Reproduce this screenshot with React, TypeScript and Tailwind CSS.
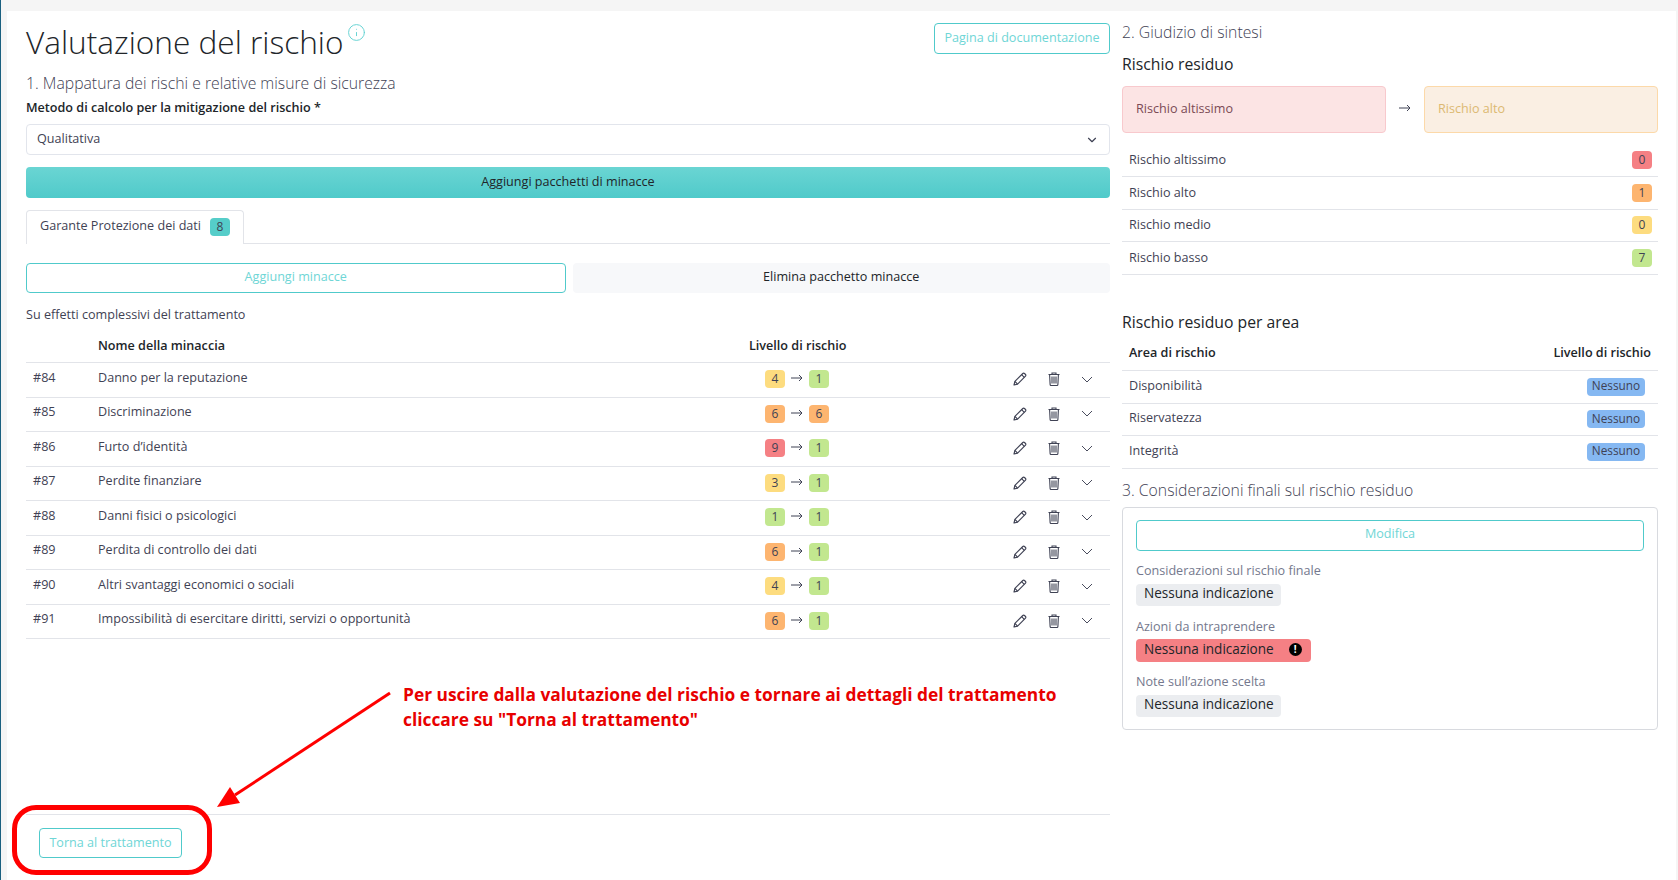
import { ChevronDown, Info } from "lucide-react";

const threats = [
  { id: "#84", name: "Danno per la reputazione", from: 4, to: 1 },
  { id: "#85", name: "Discriminazione", from: 6, to: 6 },
  { id: "#86", name: "Furto d’identità", from: 9, to: 1 },
  { id: "#87", name: "Perdite finanziare", from: 3, to: 1 },
  { id: "#88", name: "Danni fisici o psicologici", from: 1, to: 1 },
  { id: "#89", name: "Perdita di controllo dei dati", from: 6, to: 1 },
  { id: "#90", name: "Altri svantaggi economici o sociali", from: 4, to: 1 },
  { id: "#91", name: "Impossibilità di esercitare diritti, servizi o opportunità", from: 6, to: 1 },
];

const levelColors: Record<number, string> = {
  1: "bg-[#c2e78f]",
  3: "bg-[#fddc7f]",
  4: "bg-[#fddc7f]",
  6: "bg-[#fdb570]",
  9: "bg-[#f58084]",
};

const residual = [
  { label: "Rischio altissimo", value: 0, color: "bg-[#f58084]" },
  { label: "Rischio alto", value: 1, color: "bg-[#fdb570]" },
  { label: "Rischio medio", value: 0, color: "bg-[#fddc7f]" },
  { label: "Rischio basso", value: 7, color: "bg-[#c2e78f]" },
];

function PencilIcon() {
  return (
    <svg width="14" height="14" viewBox="0 0 14 14" fill="none" stroke="#3f4254" strokeWidth="1.15" strokeLinejoin="round">
      <path d="M1 13l.9-3.6L9.8 1.5a1.2 1.2 0 0 1 1.7 0l1 1a1.2 1.2 0 0 1 0 1.7L4.6 12.1Z" />
      <path d="M8.6 2.7l2.7 2.7M1.9 9.4l2.7 2.7" />
    </svg>
  );
}

function TrashIcon() {
  return (
    <svg width="12" height="14" viewBox="0 0 12 14" fill="none" stroke="#3f4254" strokeWidth="1.1">
      <path d="M.5 2.5h11M4 2.5V1h4v1.5M1.6 2.5l.5 10a1 1 0 0 0 1 1h5.8a1 1 0 0 0 1-1l.5-10" />
      <path d="M4 4.5v7M6 4.5v7M8 4.5v7" />
    </svg>
  );
}

function ChevronIcon() {
  return (
    <svg width="12" height="7" viewBox="0 0 12 7" fill="none" stroke="#3f4254" strokeWidth="0.95">
      <path d="M1 1l5 5 5-5" />
    </svg>
  );
}

function ArrowIcon({ className }: { className: string }) {
  return (
    <svg width="12" height="8" viewBox="0 0 12 8" fill="none" stroke="#3f4254" strokeWidth="1" className={className}>
      <path d="M0 4h11M8 1l3 3-3 3" />
    </svg>
  );
}

function Badge({ value, color }: { value: number; color: string }) {
  return (
    <span className={`flex h-[18px] w-[20px] items-center justify-center rounded-[4px] text-[12px] text-[#3f4254] ${color}`}>
      {value}
    </span>
  );
}

function ThreatRow({ id, name, from, to }: { id: string; name: string; from: number; to: number }) {
  return (
    <div className="flex h-[34.5px] items-center border-b border-[#e2e4e9] text-[12.6px] text-[#3f4254]">
      <span className="w-[72px] pb-[3px] pl-[7px]">{id}</span>
      <span className="w-[667px] pb-[3px]">{name}</span>
      <div className="mb-[1px] flex w-[65px] items-center">
        <Badge value={from} color={levelColors[from]} />
        <ArrowIcon className="mx-[6px] mb-[2px] shrink-0" />
        <Badge value={to} color={levelColors[to]} />
      </div>
      <div className="mb-[1px] ml-[183px] flex w-[80px] items-center justify-between">
        <PencilIcon />
        <TrashIcon />
        <ChevronIcon />
      </div>
    </div>
  );
}

function OutlineButton({ label, className }: { label: string; className: string }) {
  return (
    <button className={`rounded-[4px] border border-[#50cacb] bg-white text-[12.6px] text-[#6fd6d6] ${className}`}>
      {label}
    </button>
  );
}

export default function App() {
  return (
    <div className="relative h-[880px] w-full overflow-hidden border-l border-[#1a6080] bg-[#f5f5f5] pt-[11px] pr-[2px] pl-[6px] font-['Open_Sans',sans-serif] text-[#3f4254]">
      <div className="flex h-[869px] bg-white pl-[19px]">
        {/* Left column */}
        <div className="flex w-[1084px] flex-col">
          <div className="flex items-start justify-between pt-[12px]">
            <h1 className="flex h-[40px] items-center pb-[2px] text-[31.6px] leading-[38px] font-light text-[#212529]">
              Valutazione del rischio
              <Info size={19} strokeWidth={1.2} className="mb-[20px] ml-[3px] text-[#62d2d2]" />
            </h1>
            <OutlineButton label="Pagina di documentazione" className="h-[31px] w-[176px] pb-[1px]" />
          </div>

          <h2 className="mt-[8px] h-[24px] text-[15.75px] leading-[24px] font-light text-[#3f4254]">
            1. Mappatura dei rischi e relative misure di sicurezza
          </h2>
          <label className="mt-[3px] h-[20px] text-[12.6px] leading-[20px] font-semibold text-[#212529]">
            Metodo di calcolo per la mitigazione del rischio *
          </label>
          <div className="mt-[6px] flex h-[31px] items-center justify-between rounded-[4px] border border-[#e2e5ec] px-[10px] text-[12.6px]">
            <span>Qualitativa</span>
            <ChevronDown size={14} strokeWidth={2} className="text-[#3f4254]" />
          </div>
          <button className="mt-[12px] h-[31px] rounded-[4px] bg-gradient-to-b from-[#6ad5d3] to-[#4fcaca] text-[12.6px] text-[#212529]">
            Aggiungi pacchetti di minacce
          </button>

          {/* Tabs */}
          <div className="mt-[12px] flex h-[34px] border-b border-[#e2e4e9]">
            <div className="flex h-[34px] w-[218px] items-center rounded-t-[4px] border-x border-t border-[#e2e4e9] bg-white pb-[2px] pl-[13px] text-[12.6px]">
              Garante Protezione dei dati
              <span className="ml-[9px] flex h-[18px] w-[20px] items-center justify-center rounded-[4px] bg-[#55cdc9] text-[12px]">
                8
              </span>
            </div>
          </div>

          <div className="mt-[19px] flex gap-[7px]">
            <OutlineButton label="Aggiungi minacce" className="h-[30px] flex-1 pb-[2px]" />
            <button className="h-[30px] flex-1 rounded-[4px] bg-[#f7f8fa] pb-[2px] text-[12.6px] text-[#212529]">
              Elimina pacchetto minacce
            </button>
          </div>

          <p className="mt-[12px] h-[20px] text-[12.6px] leading-[20px]">Su effetti complessivi del trattamento</p>

          {/* Threats table */}
          <div className="flex h-[38px] items-center border-b border-[#e2e4e9] pt-[6px] text-[12.6px] font-semibold text-[#212529]">
            <span className="ml-[72px] w-[651px]">Nome della minaccia</span>
            <span>Livello di rischio</span>
          </div>
          {threats.map((threat) => (
            <ThreatRow key={threat.id} {...threat} />
          ))}

          {/* Footer */}
          <div className="mt-auto mb-[22px] border-t border-[#e2e4e9] pt-[13px] pl-[13px]">
            <OutlineButton label="Torna al trattamento" className="h-[30px] w-[143px]" />
          </div>
        </div>

        {/* Right column */}
        <div className="ml-[12px] flex w-[536px] flex-col pt-[9px]">
          <h2 className="h-[24px] text-[15.75px] leading-[24px] font-light">2. Giudizio di sintesi</h2>
          <h3 className="mt-[8px] h-[24px] text-[15.75px] leading-[24px] text-[#212529]">Rischio residuo</h3>

          <div className="mt-[10px] flex items-center">
            <div className="flex h-[47px] w-[264px] items-center rounded-[4px] border border-[#f8c9cd] bg-[#fce4e4] pb-[1px] pl-[13px] text-[12.6px] text-[#7b4a55]">
              Rischio altissimo
            </div>
            <ArrowIcon className="mx-[13px] mb-[3px] shrink-0" />
            <div className="flex h-[47px] flex-1 items-center rounded-[4px] border border-[#fcd9a9] bg-[#faefe3] pb-[1px] pl-[13px] text-[12.6px] text-[#dcb972]">
              Rischio alto
            </div>
          </div>

          <div className="mt-[11.5px]">
            {residual.map((row) => (
              <div key={row.label} className="flex h-[32.5px] items-center justify-between border-b border-[#e2e4e9] pr-[6px] pl-[7px] text-[12.6px]">
                <span className="pt-[1px]">{row.label}</span>
                <Badge value={row.value} color={row.color} />
              </div>
            ))}
          </div>

          <h3 className="mt-[35px] h-[24px] text-[15.75px] leading-[24px] text-[#212529]">Rischio residuo per area</h3>
          <div className="flex h-[37.5px] items-center justify-between border-b border-[#e2e4e9] px-[7px] pt-[3px] text-[12.6px] font-semibold text-[#212529]">
            <span>Area di rischio</span>
            <span>Livello di rischio</span>
          </div>
          {["Disponibilità", "Riservatezza", "Integrità"].map((area) => (
            <div key={area} className="flex h-[32.5px] items-center justify-between border-b border-[#e2e4e9] pr-[13px] pl-[7px] text-[12.6px]">
              <span className="pb-[1px]">{area}</span>
              <span className="flex h-[18px] w-[58px] items-center justify-center rounded-[4px] bg-[#85b8f2] pb-[1px] text-[11.8px]">
                Nessuno
              </span>
            </div>
          ))}

          <h2 className="mt-[9px] h-[24px] text-[15.75px] leading-[24px] font-light">3. Considerazioni finali sul rischio residuo</h2>
          <div className="mt-[5px] flex h-[223px] flex-col items-start rounded-[4px] border border-[#d8dadf] px-[13px] pt-[12px]">
            <OutlineButton label="Modifica" className="h-[31px] w-full pb-[2px]" />
            <span className="mt-[11px] h-[18px] text-[12.6px] leading-[18px] text-[#74788d]">Considerazioni sul rischio finale</span>
            <span className="mt-[4px] flex h-[22px] w-[145px] items-center rounded-[4px] bg-[#ebedf0] pb-[2px] pl-[8px] text-[13.55px] text-[#212529]">
              Nessuna indicazione
            </span>
            <span className="mt-[12px] h-[18px] text-[12.6px] leading-[18px] text-[#74788d]">Azioni da intraprendere</span>
            <span className="mt-[3px] flex h-[23px] w-[175px] items-center rounded-[4px] bg-[#f58084] pb-[2px] pl-[8px] text-[13.55px] text-[#212529]">
              Nessuna indicazione
              <span className="ml-[15px] flex h-[13px] w-[13px] items-center justify-center rounded-full bg-black text-[10px] leading-none font-bold text-white">
                !
              </span>
            </span>
            <span className="mt-[11px] h-[18px] text-[12.6px] leading-[18px] text-[#74788d]">Note sull’azione scelta</span>
            <span className="mt-[4px] flex h-[22px] w-[145px] items-center rounded-[4px] bg-[#ebedf0] pb-[2px] pl-[8px] text-[13.55px] text-[#212529]">
              Nessuna indicazione
            </span>
          </div>
        </div>
      </div>

      {/* Red annotation laid over the page */}
      <p className="absolute top-[682px] left-[402px] text-[17.35px] leading-[25px] font-bold text-[#e80000]">
        Per uscire dalla valutazione del rischio e tornare ai dettagli del trattamento
        <br />
        cliccare su "Torna al trattamento"
      </p>
      <svg className="absolute top-[690px] left-[210px]" width="190" height="125" viewBox="0 0 190 125" fill="none">
        <path d="M179 3L24 105" stroke="#ff0000" strokeWidth="3" />
        <path d="M6 117L19 97L29 113Z" fill="#ff0000" />
      </svg>
      <div className="absolute top-[805px] left-[11px] h-[70px] w-[200px] rounded-[24px] border-[5px] border-[#ff0000]" />
    </div>
  );
}
